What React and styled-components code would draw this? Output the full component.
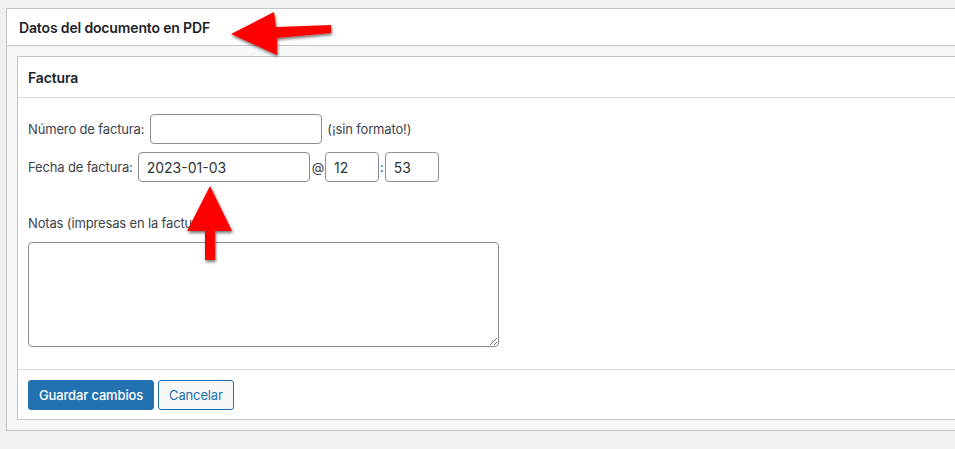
import React from "react";
import styled, { createGlobalStyle } from "styled-components";

const GlobalStyle = createGlobalStyle`
  html, body {
    margin: 0;
    background: #f0f0f1;
    overflow: hidden;
  }
  body {
    font-family: Inter, "Noto Sans", "Liberation Sans", sans-serif;
    font-size: 13px;
    letter-spacing: -0.15px;
    color: #3c434a;
  }
`;

const Arrows = () => (
  <Overlay width="955" height="449" viewBox="0 0 955 449">
    <defs>
      <filter id="shadow" x="-20%" y="-20%" width="140%" height="140%">
        <feDropShadow dx="1" dy="2" stdDeviation="1.6" floodColor="#000" floodOpacity="0.55" />
      </filter>
    </defs>
    <g fill="#ff0000" filter="url(#shadow)">
      <polygon points="231,34 274,12 276,27 331,25 331,33 277,38 277,55" />
      <polygon points="210,186 232,231 215,231 215,260 205,260 205,231 187,231" />
    </g>
  </Overlay>
);

const App = () => {
  return (
    <>
      <GlobalStyle />
      <Page>
        <Postbox>
          <PostboxHeader>Datos del documento en PDF</PostboxHeader>
          <PostboxBody>
            <Panel>
              <PanelHeader>Factura</PanelHeader>
              <Form>
                <Row>
                  <Label gap={6}>Número de factura:</Label>
                  <TextInput width={172} />
                  <Hint>(¡sin formato!)</Hint>
                </Row>
                <Row>
                  <Label gap={5}>Fecha de factura:</Label>
                  <TextInput width={172} defaultValue="2023-01-03" />
                  <Sep left={2} right={1}>@</Sep>
                  <TextInput width={54} defaultValue="12" />
                  <Sep left={1} right={1}>:</Sep>
                  <TextInput width={54} defaultValue="53" />
                </Row>
                <NotesLabel>Notas (impresas en la factura):</NotesLabel>
                <Notes />
              </Form>
              <Actions>
                <PrimaryButton>Guardar cambios</PrimaryButton>
                <SecondaryButton>Cancelar</SecondaryButton>
              </Actions>
            </Panel>
          </PostboxBody>
        </Postbox>
      </Page>
      <Arrows />
    </>
  );
};

const Page = styled.div`
  padding: 8px 0 0 6px;
`;

const Postbox = styled.div`
  background: #fff;
  border: 1px solid #c3c4c7;
  border-right: none;
`;

const PostboxHeader = styled.h2`
  margin: 0;
  height: 36px;
  display: flex;
  align-items: center;
  padding: 0 12px;
  font-size: 14px;
  font-weight: 600;
  color: #1d2327;
  border-bottom: 1px solid #c3c4c7;
`;

const PostboxBody = styled.div`
  background: #f6f7f7;
  padding: 10px 0 10px 10px;
`;

const Panel = styled.div`
  background: #fff;
  border: 1px solid #c3c4c7;
  border-right: none;
`;

const PanelHeader = styled.h3`
  margin: 0;
  height: 40px;
  display: flex;
  align-items: center;
  padding: 0 10px;
  font-size: 14px;
  font-weight: 600;
  color: #1d2327;
  border-bottom: 1px solid #dcdcde;
`;

const Form = styled.div`
  padding: 16px 10px 22px;
  display: flex;
  flex-direction: column;
  align-items: flex-start;
`;

const Row = styled.div`
  display: flex;
  align-items: center;
  margin-bottom: 8px;
`;

const Label = styled.label`
  margin-right: ${(p) => p.gap}px;
`;

const Hint = styled.span`
  margin-left: 5px;
`;

const Sep = styled.span`
  margin: 0 ${(p) => p.right}px 0 ${(p) => p.left}px;
`;

const TextInput = styled.input`
  box-sizing: border-box;
  width: ${(p) => p.width}px;
  height: 30px;
  padding: 0 8px;
  border: 1px solid #8c8f94;
  border-radius: 4px;
  font-family: inherit;
  font-size: 14px;
  color: #2c3338;
  background: #fff;
  outline: none;
`;

const NotesLabel = styled.div`
  margin-top: 24px;
  height: 18px;
  line-height: 18px;
`;

const Notes = styled.textarea`
  box-sizing: border-box;
  margin-top: 10px;
  width: 471px;
  height: 105px;
  border: 1px solid #8c8f94;
  border-radius: 4px;
  font-family: inherit;
  resize: both;
`;

const Actions = styled.div`
  display: flex;
  gap: 4px;
  padding: 10px 10px 9px;
  border-top: 1px solid #dcdcde;
`;

const PrimaryButton = styled.button`
  height: 30px;
  padding: 0 10px;
  border: 1px solid #2271b1;
  border-radius: 3px;
  background: #2271b1;
  color: #fff;
  font-family: inherit;
  font-size: 13px;
  font-weight: 500;
  letter-spacing: -0.15px;
`;

const SecondaryButton = styled(PrimaryButton)`
  background: #f6f7f7;
  color: #2271b1;
  font-weight: 400;
`;

const Overlay = styled.svg`
  position: absolute;
  left: 0;
  top: 0;
  pointer-events: none;
`;

export default App;
